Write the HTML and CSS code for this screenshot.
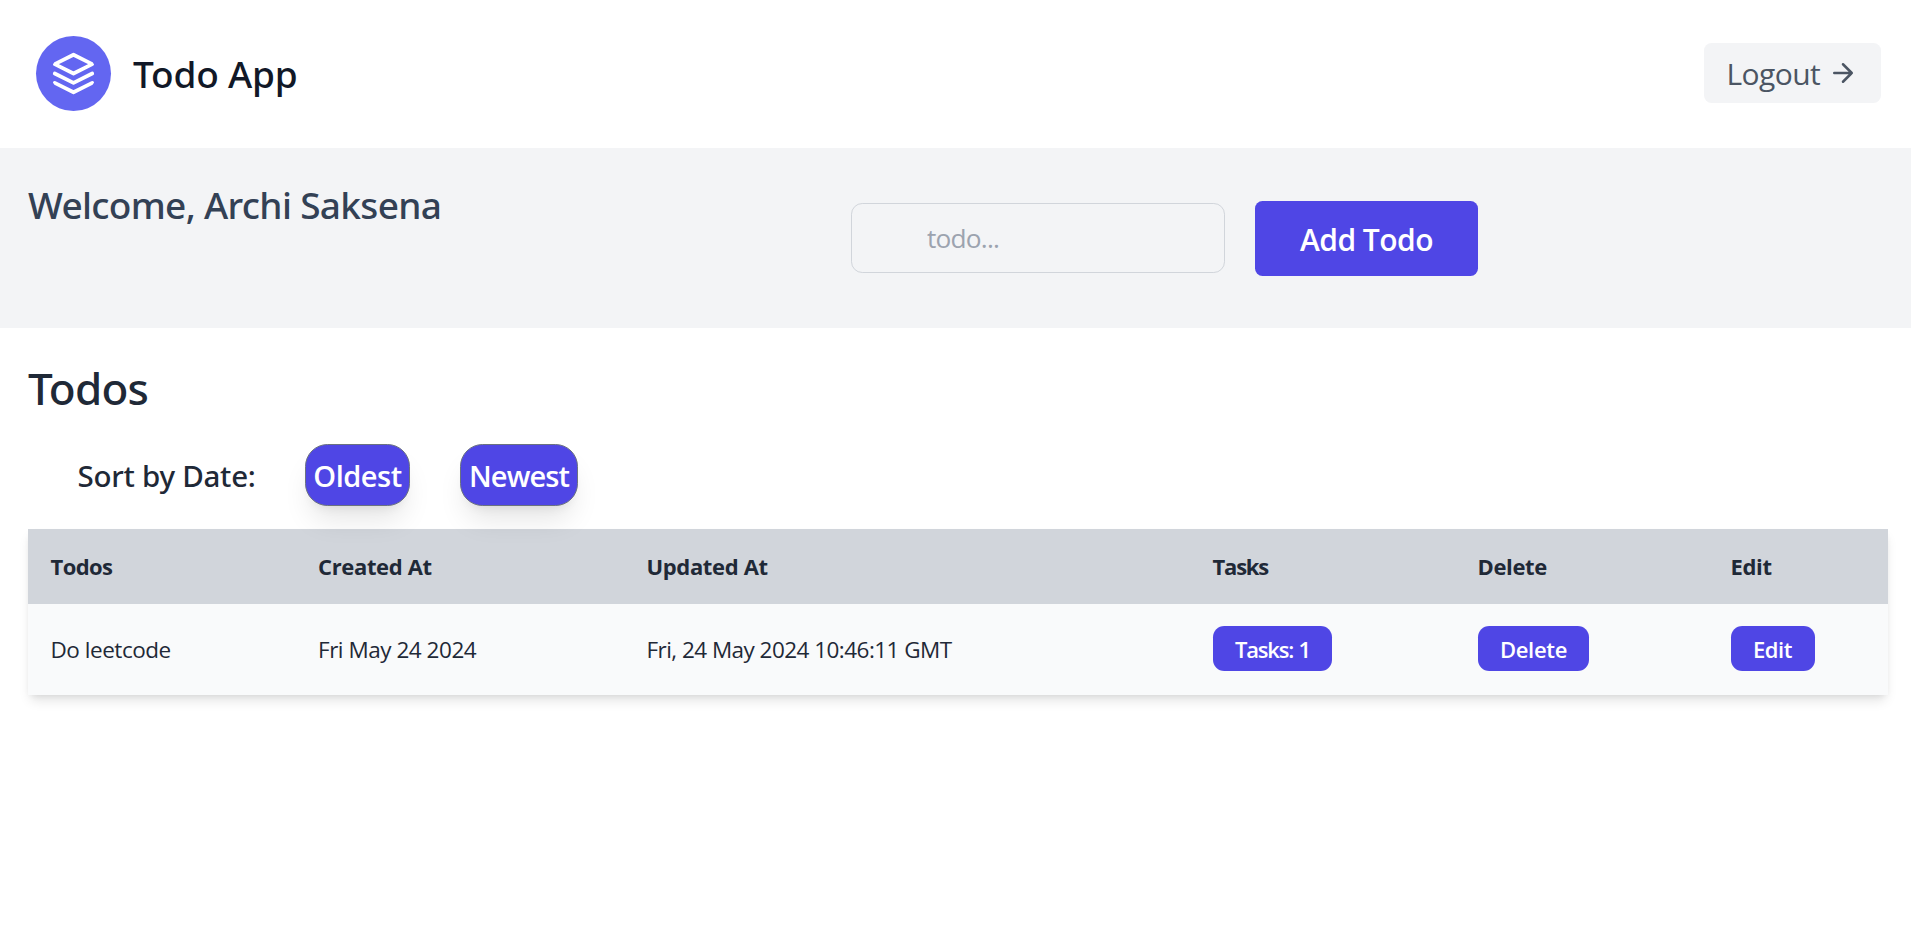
FILE: index.html
```html
<!DOCTYPE html>
<html lang="en">
<head>
<meta charset="utf-8">
<title>Todo App</title>
<link rel="stylesheet" href="styles.css">
</head>
<body>
<header class="header">
  <a class="brand">
    <svg class="brand-logo" fill="none" stroke="currentColor" stroke-linecap="round" stroke-linejoin="round" stroke-width="2" viewBox="0 0 24 24"><path d="M12 2L2 7l10 5 10-5-10-5zM2 17l10 5 10-5M2 12l10 5 10-5"/></svg>
    <span class="brand-name">Todo App</span>
  </a>
  <button class="logout"><span class="logout-text">Logout</span><svg class="logout-arrow" fill="none" stroke="currentColor" stroke-linecap="round" stroke-linejoin="round" stroke-width="2" viewBox="0 0 24 24"><path d="M5 12h14M12 5l7 7-7 7"/></svg></button>
</header>
<section class="welcome">
  <h1 class="greeting">Welcome, Archi Saksena</h1>
  <form class="add-form">
    <input class="add-input" type="text" placeholder="todo...">
    <button class="add-button" type="button">Add Todo</button>
  </form>
</section>
<main class="todos">
  <h2 class="todos-title">Todos</h2>
  <div class="sort">
    <span class="sort-label">Sort by Date:</span>
    <button class="sort-button oldest">Oldest</button>
    <button class="sort-button newest">Newest</button>
  </div>
  <table class="table">
    <colgroup><col class="c-todo"><col class="c-created"><col class="c-updated"><col class="c-tasks"><col class="c-delete"><col class="c-edit"></colgroup>
    <thead>
      <tr><th><span class="h-todos">Todos</span></th><th>Created At</th><th>Updated At</th><th><span class="h-tasks">Tasks</span></th><th>Delete</th><th>Edit</th></tr>
    </thead>
    <tbody>
      <tr><td>Do leetcode</td><td>Fri May 24 2024</td><td class="updated">Fri, 24 May 2024 10:46:11 GMT</td><td><button class="action tasks">Tasks: 1</button></td><td><button class="action delete">Delete</button></td><td><button class="action edit">Edit</button></td></tr>
    </tbody>
  </table>
</main>
</body>
</html>
```
FILE: styles.css
```css
* { box-sizing: border-box; margin: 0; padding: 0; }
body { min-height: 935px; background: #fff; color: #1f2937; font-family: "Open Sans", "Noto Sans", sans-serif; }
button, input { font-family: inherit; border: 0; white-space: nowrap; }
.brand-name, .greeting, .todos-title, .sort-label { font-family: "Noto Sans", "Open Sans", sans-serif; font-weight: 500; }

.header { display: flex; align-items: center; justify-content: space-between; height: 148px; padding: 0 30px 2px 36px; }
.brand { display: flex; align-items: center; gap: 22px; color: #111827; }
.brand-logo { width: 75px; height: 75px; padding: 15px; border-radius: 50%; background: #6366f1; color: #fff; }
.brand-name { font-size: 37px; line-height: 56px; letter-spacing: -0.2px; padding-top: 2px; }
.logout { display: flex; align-items: center; width: 177px; height: 60px; padding: 0 23.5px 0 22.5px; border-radius: 7.5px; background: #f3f4f6; color: #4b5563; font-size: 30px; line-height: 45px; }
.logout-text { flex: 1; padding-top: 1px; text-align: left; font-weight: 400; letter-spacing: -0.6px; }
.logout-arrow { width: 30px; height: 30px; flex: none; }

.welcome { display: flex; height: 180px; padding: 28px 0 0 28px; background: #f3f4f6; }
.greeting { width: 823px; color: #334155; font-size: 37px; line-height: 58px; letter-spacing: -0.67px; }
.add-form { display: flex; align-items: flex-start; gap: 30px; height: 75px; margin-top: 25px; }
.add-input { width: 374px; height: 70px; margin-top: 2px; padding: 0 75px; border: 1px solid #d1d5db; border-radius: 11.25px; background: transparent; font-size: 26.25px; font-weight: 400; letter-spacing: -0.8px; }
.add-input::placeholder { color: #9ca3af; opacity: 1; }
.add-button { width: 223px; height: 75px; padding-top: 1px; border-radius: 7.5px; background: #4f46e5; color: #fff; font-size: 30px; font-weight: 600; letter-spacing: -0.55px; }

.todos { padding: 26px 23px 0 28px; }
.todos-title { height: 66px; font-size: 44px; line-height: 68px; letter-spacing: -0.8px; }
.sort { display: flex; align-items: center; height: 62px; margin-top: 24px; padding-left: 49.5px; }
.sort-label { width: 227.5px; padding-top: 1px; font-size: 29.5px; letter-spacing: -0.25px; }
.sort-button { position: relative; height: 62px; padding-top: 1px; border: 1px solid #6b7280; border-radius: 22.5px; background: #4f46e5; color: #fff; font-size: 29px; font-weight: 600; box-shadow: 0 18.75px 28px -5.6px rgba(0,0,0,.1), 0 7.5px 11.25px -7.5px rgba(0,0,0,.1); }
.oldest { width: 105px; margin-right: 50px; letter-spacing: -0.5px; }
.newest { width: 118px; letter-spacing: -0.9px; }

.table { width: 1860px; margin-top: 23px; table-layout: fixed; border-collapse: collapse; text-align: left; font-size: 22.5px; line-height: 30px; border-radius: 0 0 7px 7px; box-shadow: 0 7.5px 11.25px -2px rgba(0,0,0,.1), 0 3.75px 7.5px -3.75px rgba(0,0,0,.1); }
.c-todo { width: 267.5px; }
.c-created { width: 328.5px; }
.c-updated { width: 566px; }
.c-tasks { width: 265px; }
.c-delete { width: 253px; }
.c-edit { width: 180px; }
th { height: 75px; padding: 0 22.5px 1px; background: #d1d5db; font-size: 22px; font-weight: 700; letter-spacing: -0.35px; }
.h-todos { letter-spacing: -0.6px; }
.h-tasks { letter-spacing: -1.2px; }
td { height: 91px; padding: 0 22.5px; background: #f9fafb; font-weight: 400; letter-spacing: -0.47px; }
.updated { letter-spacing: -0.54px; }
.action { display: block; height: 45px; padding-top: 1px; border-radius: 11.25px; background: #4f46e5; color: #fff; font-size: 22px; font-weight: 600; margin-top: -2px; }
.tasks { width: 119px; padding-left: 1px; letter-spacing: -1.2px; word-spacing: 1px; }
.delete { width: 111px; padding-left: 1px; letter-spacing: -0.3px; }
.edit { width: 84px; letter-spacing: -0.4px; }
```
